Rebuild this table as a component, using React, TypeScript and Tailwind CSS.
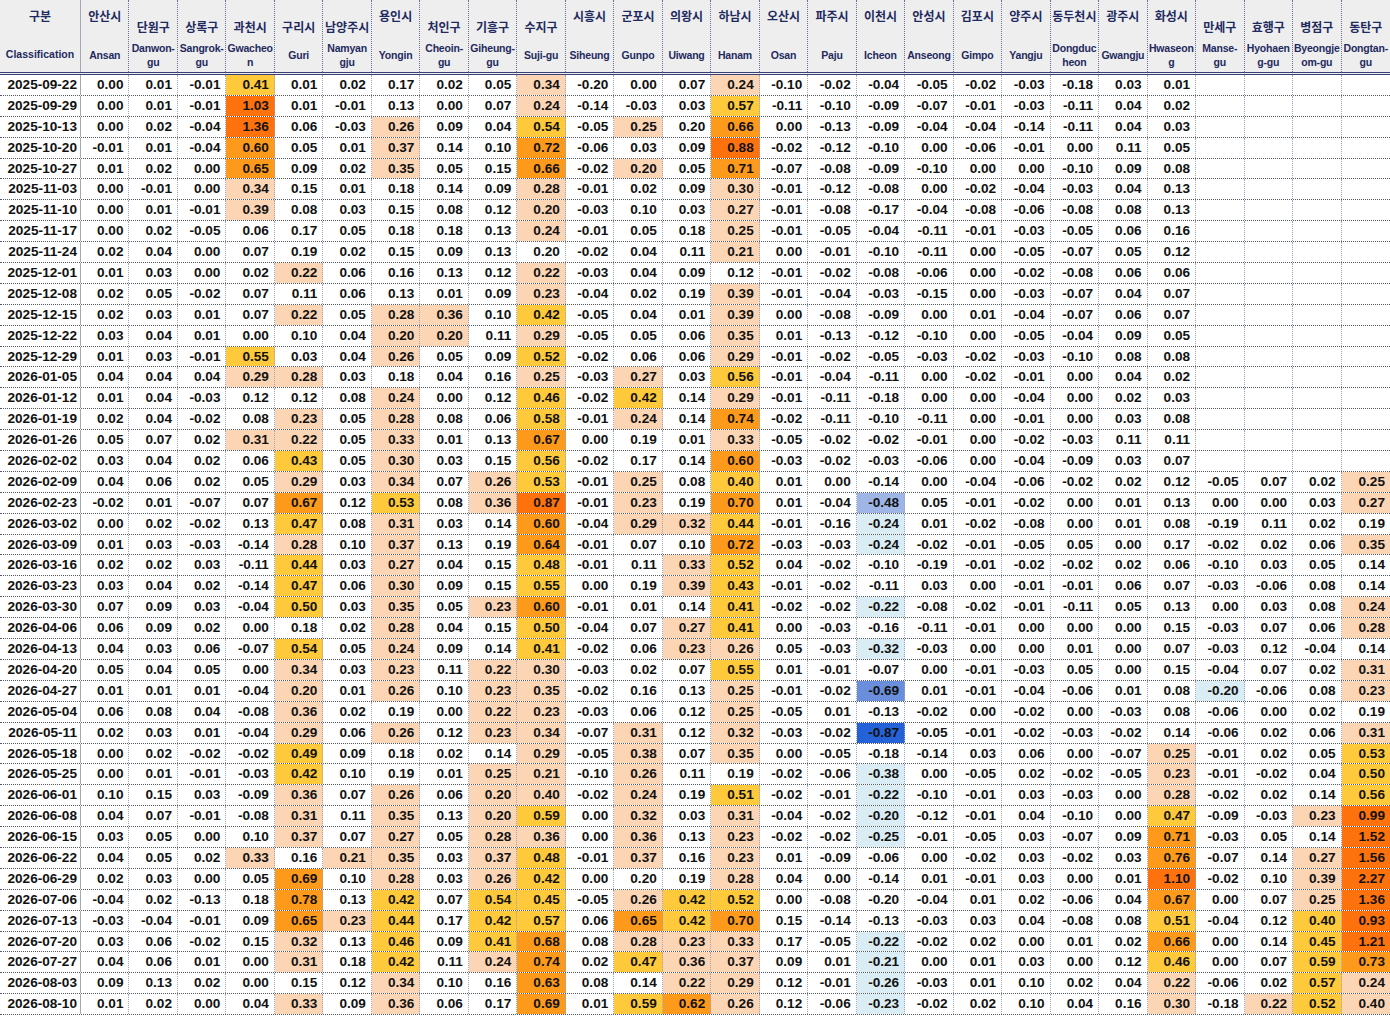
import React from 'react';

type Col = { kr: string; en: string[]; low?: boolean };

const COLS: Col[] = [
  { kr: '안산시', en: ['Ansan'] },
  { kr: '단원구', en: ['Danwon-', 'gu'], low: true },
  { kr: '상록구', en: ['Sangrok-', 'gu'], low: true },
  { kr: '과천시', en: ['Gwacheo', 'n'], low: true },
  { kr: '구리시', en: ['Guri'], low: true },
  { kr: '남양주시', en: ['Namyan', 'gju'], low: true },
  { kr: '용인시', en: ['Yongin'] },
  { kr: '처인구', en: ['Cheoin-', 'gu'], low: true },
  { kr: '기흥구', en: ['Giheung-', 'gu'], low: true },
  { kr: '수지구', en: ['Suji-gu'], low: true },
  { kr: '시흥시', en: ['Siheung'] },
  { kr: '군포시', en: ['Gunpo'] },
  { kr: '의왕시', en: ['Uiwang'] },
  { kr: '하남시', en: ['Hanam'] },
  { kr: '오산시', en: ['Osan'] },
  { kr: '파주시', en: ['Paju'] },
  { kr: '이천시', en: ['Icheon'] },
  { kr: '안성시', en: ['Anseong'] },
  { kr: '김포시', en: ['Gimpo'] },
  { kr: '양주시', en: ['Yangju'] },
  { kr: '동두천시', en: ['Dongduc', 'heon'] },
  { kr: '광주시', en: ['Gwangju'] },
  { kr: '화성시', en: ['Hwaseon', 'g'] },
  { kr: '만세구', en: ['Manse-', 'gu'], low: true },
  { kr: '효행구', en: ['Hyohaen', 'g-gu'], low: true },
  { kr: '병점구', en: ['Byeongje', 'om-gu'], low: true },
  { kr: '동탄구', en: ['Dongtan-', 'gu'], low: true },
];

// weekly change rates, one line per date
const ROWS: [string, string][] = [
  ['2025-09-22', '0.00 0.01 -0.01 0.41 0.01 0.02 0.17 0.02 0.05 0.34 -0.20 0.00 0.07 0.24 -0.10 -0.02 -0.04 -0.05 -0.02 -0.03 -0.18 0.03 0.01'],
  ['2025-09-29', '0.00 0.01 -0.01 1.03 0.01 -0.01 0.13 0.00 0.07 0.24 -0.14 -0.03 0.03 0.57 -0.11 -0.10 -0.09 -0.07 -0.01 -0.03 -0.11 0.04 0.02'],
  ['2025-10-13', '0.00 0.02 -0.04 1.36 0.06 -0.03 0.26 0.09 0.04 0.54 -0.05 0.25 0.20 0.66 0.00 -0.13 -0.09 -0.04 -0.04 -0.14 -0.11 0.04 0.03'],
  ['2025-10-20', '-0.01 0.01 -0.04 0.60 0.05 0.01 0.37 0.14 0.10 0.72 -0.06 0.03 0.09 0.88 -0.02 -0.12 -0.10 0.00 -0.06 -0.01 0.00 0.11 0.05'],
  ['2025-10-27', '0.01 0.02 0.00 0.65 0.09 0.02 0.35 0.05 0.15 0.66 -0.02 0.20 0.05 0.71 -0.07 -0.08 -0.09 -0.10 0.00 0.00 -0.10 0.09 0.08'],
  ['2025-11-03', '0.00 -0.01 0.00 0.34 0.15 0.01 0.18 0.14 0.09 0.28 -0.01 0.02 0.09 0.30 -0.01 -0.12 -0.08 0.00 -0.02 -0.04 -0.03 0.04 0.13'],
  ['2025-11-10', '0.00 0.01 -0.01 0.39 0.08 0.03 0.15 0.08 0.12 0.20 -0.03 0.10 0.03 0.27 -0.01 -0.08 -0.17 -0.04 -0.08 -0.06 -0.08 0.08 0.13'],
  ['2025-11-17', '0.00 0.02 -0.05 0.06 0.17 0.05 0.18 0.18 0.13 0.24 -0.01 0.05 0.18 0.25 -0.01 -0.05 -0.04 -0.11 -0.01 -0.03 -0.05 0.06 0.16'],
  ['2025-11-24', '0.02 0.04 0.00 0.07 0.19 0.02 0.15 0.09 0.13 0.20 -0.02 0.04 0.11 0.21 0.00 -0.01 -0.10 -0.11 0.00 -0.05 -0.07 0.05 0.12'],
  ['2025-12-01', '0.01 0.03 0.00 0.02 0.22 0.06 0.16 0.13 0.12 0.22 -0.03 0.04 0.09 0.12 -0.01 -0.02 -0.08 -0.06 0.00 -0.02 -0.08 0.06 0.06'],
  ['2025-12-08', '0.02 0.05 -0.02 0.07 0.11 0.06 0.13 0.01 0.09 0.23 -0.04 0.02 0.19 0.39 -0.01 -0.04 -0.03 -0.15 0.00 -0.03 -0.07 0.04 0.07'],
  ['2025-12-15', '0.02 0.03 0.01 0.07 0.22 0.05 0.28 0.36 0.10 0.42 -0.05 0.04 0.01 0.39 0.00 -0.08 -0.09 0.00 0.01 -0.04 -0.07 0.06 0.07'],
  ['2025-12-22', '0.03 0.04 0.01 0.00 0.10 0.04 0.20 0.20 0.11 0.29 -0.05 0.05 0.06 0.35 0.01 -0.13 -0.12 -0.10 0.00 -0.05 -0.04 0.09 0.05'],
  ['2025-12-29', '0.01 0.03 -0.01 0.55 0.03 0.04 0.26 0.05 0.09 0.52 -0.02 0.06 0.06 0.29 -0.01 -0.02 -0.05 -0.03 -0.02 -0.03 -0.10 0.08 0.08'],
  ['2026-01-05', '0.04 0.04 0.04 0.29 0.28 0.03 0.18 0.04 0.16 0.25 -0.03 0.27 0.03 0.56 -0.01 -0.04 -0.11 0.00 -0.02 -0.01 0.00 0.04 0.02'],
  ['2026-01-12', '0.01 0.04 -0.03 0.12 0.12 0.08 0.24 0.00 0.12 0.46 -0.02 0.42 0.14 0.29 -0.01 -0.11 -0.18 0.00 0.00 -0.04 0.00 0.02 0.03'],
  ['2026-01-19', '0.02 0.04 -0.02 0.08 0.23 0.05 0.28 0.08 0.06 0.58 -0.01 0.24 0.14 0.74 -0.02 -0.11 -0.10 -0.11 0.00 -0.01 0.00 0.03 0.08'],
  ['2026-01-26', '0.05 0.07 0.02 0.31 0.22 0.05 0.33 0.01 0.13 0.67 0.00 0.19 0.01 0.33 -0.05 -0.02 -0.02 -0.01 0.00 -0.02 -0.03 0.11 0.11'],
  ['2026-02-02', '0.03 0.04 0.02 0.06 0.43 0.05 0.30 0.03 0.15 0.56 -0.02 0.17 0.14 0.60 -0.03 -0.02 -0.03 -0.06 0.00 -0.04 -0.09 0.03 0.07'],
  ['2026-02-09', '0.04 0.06 0.02 0.05 0.29 0.03 0.34 0.07 0.26 0.53 -0.01 0.25 0.08 0.40 0.01 0.00 -0.14 0.00 -0.04 -0.06 -0.02 0.02 0.12 -0.05 0.07 0.02 0.25'],
  ['2026-02-23', '-0.02 0.01 -0.07 0.07 0.67 0.12 0.53 0.08 0.36 0.87 -0.01 0.23 0.19 0.70 0.01 -0.04 -0.48 0.05 -0.01 -0.02 0.00 0.01 0.13 0.00 0.00 0.03 0.27'],
  ['2026-03-02', '0.00 0.02 -0.02 0.13 0.47 0.08 0.31 0.03 0.14 0.60 -0.04 0.29 0.32 0.44 -0.01 -0.16 -0.24 0.01 -0.02 -0.08 0.00 0.01 0.08 -0.19 0.11 0.02 0.19'],
  ['2026-03-09', '0.01 0.03 -0.03 -0.14 0.28 0.10 0.37 0.13 0.19 0.64 -0.01 0.07 0.10 0.72 -0.03 -0.03 -0.24 -0.02 -0.01 -0.05 0.05 0.00 0.17 -0.02 0.02 0.06 0.35'],
  ['2026-03-16', '0.02 0.02 0.03 -0.11 0.44 0.03 0.27 0.04 0.15 0.48 -0.01 0.11 0.33 0.52 0.04 -0.02 -0.10 -0.19 -0.01 -0.02 -0.02 0.02 0.06 -0.10 0.03 0.05 0.14'],
  ['2026-03-23', '0.03 0.04 0.02 -0.14 0.47 0.06 0.30 0.09 0.15 0.55 0.00 0.19 0.39 0.43 -0.01 -0.02 -0.11 0.03 0.00 -0.01 -0.01 0.06 0.07 -0.03 -0.06 0.08 0.14'],
  ['2026-03-30', '0.07 0.09 0.03 -0.04 0.50 0.03 0.35 0.05 0.23 0.60 -0.01 0.01 0.14 0.41 -0.02 -0.02 -0.22 -0.08 -0.02 -0.01 -0.11 0.05 0.13 0.00 0.03 0.08 0.24'],
  ['2026-04-06', '0.06 0.09 0.02 0.00 0.18 0.02 0.28 0.04 0.15 0.50 -0.04 0.07 0.27 0.41 0.00 -0.03 -0.16 -0.11 -0.01 0.00 0.00 0.00 0.15 -0.03 0.07 0.06 0.28'],
  ['2026-04-13', '0.04 0.03 0.06 -0.07 0.54 0.05 0.24 0.09 0.14 0.41 -0.02 0.06 0.23 0.26 0.05 -0.03 -0.32 -0.03 0.00 0.00 0.01 0.00 0.07 -0.03 0.12 -0.04 0.14'],
  ['2026-04-20', '0.05 0.04 0.05 0.00 0.34 0.03 0.23 0.11 0.22 0.30 -0.03 0.02 0.07 0.55 0.01 -0.01 -0.07 0.00 -0.01 -0.03 0.05 0.00 0.15 -0.04 0.07 0.02 0.31'],
  ['2026-04-27', '0.01 0.01 0.01 -0.04 0.20 0.01 0.26 0.10 0.23 0.35 -0.02 0.16 0.13 0.25 -0.01 -0.02 -0.69 0.01 -0.01 -0.04 -0.06 0.01 0.08 -0.20 -0.06 0.08 0.23'],
  ['2026-05-04', '0.06 0.08 0.04 -0.08 0.36 0.02 0.19 0.00 0.22 0.23 -0.03 0.06 0.12 0.25 -0.05 0.01 -0.13 -0.02 0.00 -0.02 0.00 -0.03 0.08 -0.06 0.00 0.02 0.19'],
  ['2026-05-11', '0.02 0.03 0.01 -0.04 0.29 0.06 0.26 0.12 0.23 0.34 -0.07 0.31 0.12 0.32 -0.03 -0.02 -0.87 -0.05 -0.01 -0.02 -0.03 -0.02 0.14 -0.06 0.02 0.06 0.31'],
  ['2026-05-18', '0.00 0.02 -0.02 -0.02 0.49 0.09 0.18 0.02 0.14 0.29 -0.05 0.38 0.07 0.35 0.00 -0.05 -0.18 -0.14 0.03 0.06 0.00 -0.07 0.25 -0.01 0.02 0.05 0.53'],
  ['2026-05-25', '0.00 0.01 -0.01 -0.03 0.42 0.10 0.19 0.01 0.25 0.21 -0.10 0.26 0.11 0.19 -0.02 -0.06 -0.38 0.00 -0.05 0.02 -0.02 -0.05 0.23 -0.01 -0.02 0.04 0.50'],
  ['2026-06-01', '0.10 0.15 0.03 -0.09 0.36 0.07 0.26 0.06 0.20 0.40 -0.02 0.24 0.19 0.51 -0.02 -0.01 -0.22 -0.10 -0.01 0.03 -0.03 0.00 0.28 -0.02 0.02 0.14 0.56'],
  ['2026-06-08', '0.04 0.07 -0.01 -0.08 0.31 0.11 0.35 0.13 0.20 0.59 0.00 0.32 0.03 0.31 -0.04 -0.02 -0.20 -0.12 -0.01 0.04 -0.10 0.00 0.47 -0.09 -0.03 0.23 0.99'],
  ['2026-06-15', '0.03 0.05 0.00 0.10 0.37 0.07 0.27 0.05 0.28 0.36 0.00 0.36 0.13 0.23 -0.02 -0.02 -0.25 -0.01 -0.05 0.03 -0.07 0.09 0.71 -0.03 0.05 0.14 1.52'],
  ['2026-06-22', '0.04 0.05 0.02 0.33 0.16 0.21 0.35 0.03 0.37 0.48 -0.01 0.37 0.16 0.23 0.01 -0.09 -0.06 0.00 -0.02 0.03 -0.02 0.03 0.76 -0.07 0.14 0.27 1.56'],
  ['2026-06-29', '0.02 0.03 0.00 0.05 0.69 0.10 0.28 0.03 0.26 0.42 0.00 0.20 0.19 0.28 0.04 0.00 -0.14 0.01 -0.01 0.03 0.00 0.01 1.10 -0.02 0.10 0.39 2.27'],
  ['2026-07-06', '-0.04 0.02 -0.13 0.18 0.78 0.13 0.42 0.07 0.54 0.45 -0.05 0.26 0.42 0.52 0.00 -0.08 -0.20 -0.04 0.01 0.02 -0.06 0.04 0.67 0.00 0.07 0.25 1.36'],
  ['2026-07-13', '-0.03 -0.04 -0.01 0.09 0.65 0.23 0.44 0.17 0.42 0.57 0.06 0.65 0.42 0.70 0.15 -0.14 -0.13 -0.03 0.03 0.04 -0.08 0.08 0.51 -0.04 0.12 0.40 0.93'],
  ['2026-07-20', '0.03 0.06 -0.02 0.15 0.32 0.13 0.46 0.09 0.41 0.68 0.08 0.28 0.23 0.33 0.17 -0.05 -0.22 -0.02 0.02 0.00 0.01 0.02 0.66 0.00 0.14 0.45 1.21'],
  ['2026-07-27', '0.04 0.06 0.01 0.00 0.31 0.18 0.42 0.11 0.24 0.74 0.02 0.47 0.36 0.37 0.09 0.01 -0.21 0.00 0.01 0.03 0.00 0.12 0.46 0.00 0.07 0.59 0.73'],
  ['2026-08-03', '0.09 0.13 0.02 0.00 0.15 0.12 0.34 0.10 0.16 0.63 0.08 0.14 0.22 0.29 0.12 -0.01 -0.26 -0.03 0.01 0.10 0.02 0.04 0.22 -0.06 0.02 0.57 0.24'],
  ['2026-08-10', '0.01 0.02 0.00 0.04 0.33 0.09 0.36 0.06 0.17 0.69 0.01 0.59 0.62 0.26 0.12 -0.06 -0.23 -0.02 0.02 0.10 0.04 0.16 0.30 -0.18 0.22 0.52 0.40'],
];

// rounded values that sit on the other side of a threshold
const OVERRIDES: Record<string, string> = {
  '2025-09-22|10': '',
  '2025-10-13|12': '',
  '2025-11-24|9': '',
  '2026-06-29|11': '',
  '2026-07-06|16': '',
  '2026-06-01|9': 'bg-[#fcd5b5]',
  '2026-08-10|26': 'bg-[#fcd5b5]',
};

function shade(v: number): string {
  if (v >= 0.8) return 'bg-[#fe720e]';
  if (v >= 0.6) return 'bg-[#fd9a1c]';
  if (v >= 0.4) return 'bg-[#fec93b]';
  if (v >= 0.2) return 'bg-[#fcd5b5]';
  if (v <= -0.8) return 'bg-[#2562d8]';
  if (v <= -0.6) return 'bg-[#6a8edb]';
  if (v <= -0.4) return 'bg-[#9fb5e6]';
  if (v <= -0.2) return 'bg-[#dbedf4]';
  return '';
}

const FONT = { fontFamily: '"Liberation Sans", Arial, "Noto Sans CJK KR", sans-serif' };

const HeaderCell: React.FC<{ col: Col; last: boolean }> = ({ col, last }) => (
  <div className={`flex flex-col h-[72px] ${last ? '' : 'border-r border-dotted border-r-[#6d7196]'}`}>
    <div className={`h-[38px] text-center text-[12px] leading-[14px] font-bold ${col.low ? 'pt-[21px]' : 'pt-[10px]'}`}>
      {col.kr}
    </div>
    <div className="flex-1 flex flex-col items-center justify-center text-[10.5px] leading-[14px] font-bold tracking-[-0.2px] whitespace-nowrap">
      {col.en.map(l => <span key={l}>{l}</span>)}
    </div>
  </div>
);

export default function App() {
  return (
    <div className="w-[1390px] h-[1016px] overflow-hidden bg-white" style={FONT}>
      {/* header */}
      <div className="grid grid-cols-[81px_repeat(27,minmax(0,1fr))] bg-[#eeeeee] text-[#1f2a60] border-b-[3px] border-double border-b-[#3a4075]">
        <div className="flex flex-col h-[72px] border-r border-r-[#a3a7b8]">
          <div className="h-[38px] pt-[10px] text-center text-[12px] leading-[14px] font-bold">구분</div>
          <div className="flex-1 flex items-center justify-center text-[10.5px] font-bold">Classification</div>
        </div>
        {COLS.map((c, i) => <HeaderCell key={c.kr} col={c} last={i === COLS.length - 1} />)}
      </div>

      {/* body */}
      {ROWS.map(([date, line]) => {
        const vals = line.split(' ');
        return (
          <div
            key={date}
            className="grid grid-cols-[81px_repeat(27,minmax(0,1fr))] h-[20.9px] border-b border-dotted border-b-[#50557a] text-[#111] text-[13.6px] font-bold leading-[19px]"
          >
            <div className="text-right pr-[3px] border-r border-r-[#a3a7b8]">{date}</div>
            {COLS.map((_, ci) => {
              const s = vals[ci];
              const key = `${date}|${ci}`;
              const bg = s === undefined ? '' : key in OVERRIDES ? OVERRIDES[key] : shade(parseFloat(s));
              return (
                <div
                  key={ci}
                  className={`text-right pr-[5px] ${ci === COLS.length - 1 ? '' : 'border-r border-dotted border-r-[#9ea3c2]'} ${bg}`}
                >
                  {s ?? ''}
                </div>
              );
            })}
          </div>
        );
      })}
    </div>
  );
}
